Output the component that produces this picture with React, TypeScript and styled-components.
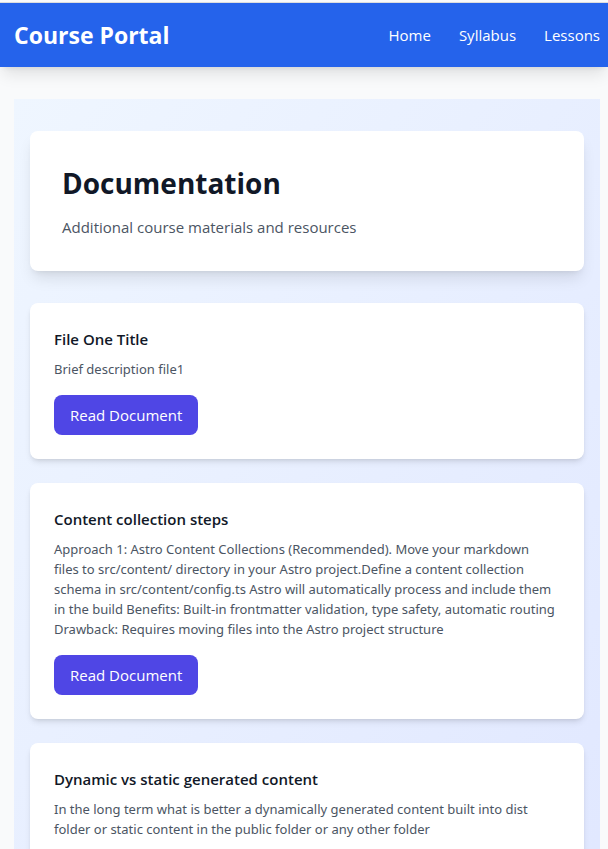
import React from "react";
import styled, { createGlobalStyle } from "styled-components";

const GlobalStyle = createGlobalStyle`
  *, *::before, *::after { box-sizing: border-box; }
  body {
    margin: 0;
    background: #f9fafb;
    color: #111827;
    font-family: "Segoe UI", "Open Sans", "Noto Sans", sans-serif;
    font-size: 16px;
    line-height: 24px;
  }
  h1, h2, p { margin: 0; }
`;

const Page = styled.div`
  border-top: 2px solid #f9fafb;
`;

const Header = styled.header`
  display: flex;
  align-items: center;
  justify-content: space-between;
  height: 65px;
  padding: 0 8px 0 14px;
  border-top: 1px solid #dddddd;
  background: #2563eb;
  color: #ffffff;
  box-shadow: 0 10px 15px -3px rgba(0, 0, 0, 0.1), 0 4px 6px -4px rgba(0, 0, 0, 0.1);
`;

const Brand = styled.a`
  color: inherit;
  font-size: 23px;
  line-height: 32px;
  font-weight: 700;
  text-decoration: none;
`;

const Nav = styled.nav`
  display: flex;
  gap: 28px;
`;

const NavLink = styled.a`
  color: inherit;
  font-size: 15px;
  text-decoration: none;
`;

const Main = styled.main`
  display: flex;
  flex-direction: column;
  gap: 32px;
  margin: 32px 8px 0 14px;
  padding: 32px 16px;
  background: linear-gradient(to bottom right, #eff6ff, #e0e7ff);
`;

const Intro = styled.section`
  padding: 32px;
  border-radius: 8px;
  background: #ffffff;
  box-shadow: 0 10px 15px -3px rgba(0, 0, 0, 0.1), 0 4px 6px -4px rgba(0, 0, 0, 0.1);
`;

const Title = styled.h1`
  font-size: 28px;
  line-height: 40px;
  font-weight: 700;
`;

const Lead = styled.p`
  margin-top: 12px;
  color: #4b5563;
  font-size: 15px;
`;

const DocumentList = styled.div`
  display: grid;
  gap: 24px;
`;

const Card = styled.article`
  padding: 24px;
  border-radius: 8px;
  background: #ffffff;
  box-shadow: 0 4px 6px -1px rgba(0, 0, 0, 0.1), 0 2px 4px -2px rgba(0, 0, 0, 0.1);
`;

const CardTitle = styled.h2`
  font-size: 15px;
  line-height: 24px;
  font-weight: 600;
`;

const Description = styled.p`
  margin: 8px 0 16px;
  color: #4b5563;
  font-family: "Segoe UI", "Noto Sans", sans-serif;
  font-size: 13px;
  line-height: 20px;
  white-space: pre-line;
`;

const ReadLink = styled.a`
  display: inline-flex;
  align-items: center;
  height: 40px;
  padding: 0 16px;
  border-radius: 8px;
  background: #4f46e5;
  color: #ffffff;
  font-size: 15px;
  text-decoration: none;
  vertical-align: top;
`;

const documents = [
  { title: "File One Title", description: "Brief description file1" },
  {
    title: "Content collection steps",
    description:
      "Approach 1: Astro Content Collections (Recommended). Move your markdown\nfiles to src/content/ directory in your Astro project.Define a content collection schema in src/content/config.ts Astro will automatically process and include them in the build Benefits: Built-in frontmatter validation, type safety, automatic routing Drawback: Requires moving files into the Astro project structure",
  },
  {
    title: "Dynamic vs static generated content",
    description:
      "In the long term what is better a dynamically generated content built into dist folder or static content in the public folder or any other folder",
  },
];

export default function App() {
  return (
    <>
      <GlobalStyle />
      <Page>
        <Header>
          <Brand href="#">Course Portal</Brand>
          <Nav aria-label="Main">
            {["Home", "Syllabus", "Lessons"].map((label) => (
              <NavLink key={label} href="#">{label}</NavLink>
            ))}
          </Nav>
        </Header>
        <Main>
          <Intro>
            <Title>Documentation</Title>
            <Lead>Additional course materials and resources</Lead>
          </Intro>
          <DocumentList>
            {documents.map((doc) => (
              <Card key={doc.title}>
                <CardTitle>{doc.title}</CardTitle>
                <Description>{doc.description}</Description>
                <ReadLink href="#">Read Document</ReadLink>
              </Card>
            ))}
          </DocumentList>
        </Main>
      </Page>
    </>
  );
}
